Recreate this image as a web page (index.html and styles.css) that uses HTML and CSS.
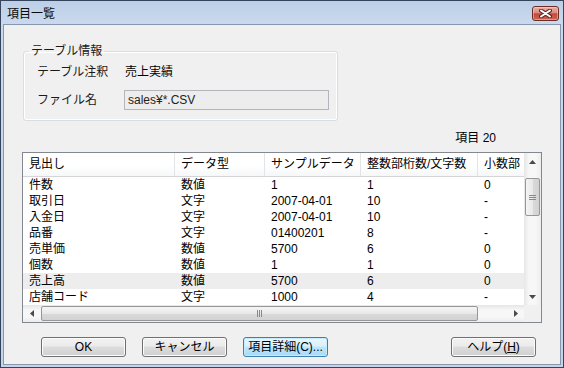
FILE: index.html
```html
<!DOCTYPE html>
<html lang="ja">
<head>
    <meta charset="UTF-8">
    <title>項目一覧</title>
    <link rel="stylesheet" href="styles.css">
</head>
<body>
<div class="window">
    <div class="titlebar">
        <span class="title">項目一覧</span>
        <span class="close">
            <svg width="13" height="9" viewBox="0 0 13 9">
                <path d="M2 1.5 L11 7.5 M11 1.5 L2 7.5" stroke="#6a2219" stroke-width="4" stroke-linecap="round"/>
                <path d="M2 1.5 L11 7.5 M11 1.5 L2 7.5" stroke="#fff" stroke-width="2" stroke-linecap="round"/>
            </svg>
        </span>
    </div>

    <div class="client">
        <fieldset class="group">
            <legend>テーブル情報</legend>
            <div class="field">
                <span class="label">テーブル注釈</span>
                <span class="value">売上実績</span>
            </div>
            <div class="field field-gap">
                <span class="label">ファイル名</span>
                <div class="input">sales¥*.CSV</div>
            </div>
        </fieldset>

        <div class="count">項目 20</div>

        <div class="listview">
            <div class="lv-view">
                <div class="lv-head">
                    <div class="lv-th">見出し</div>
                    <div class="lv-th">データ型</div>
                    <div class="lv-th">サンプルデータ</div>
                    <div class="lv-th">整数部桁数/文字数</div>
                    <div class="lv-th">小数部</div>
                </div>
                <div class="lv-row"><span>件数</span><span>数値</span><span>1</span><span>1</span><span>0</span></div>
                <div class="lv-row"><span>取引日</span><span>文字</span><span>2007-04-01</span><span>10</span><span>-</span></div>
                <div class="lv-row"><span>入金日</span><span>文字</span><span>2007-04-01</span><span>10</span><span>-</span></div>
                <div class="lv-row"><span>品番</span><span>文字</span><span>01400201</span><span>8</span><span>-</span></div>
                <div class="lv-row"><span>売単価</span><span>数値</span><span>5700</span><span>6</span><span>0</span></div>
                <div class="lv-row"><span>個数</span><span>数値</span><span>1</span><span>1</span><span>0</span></div>
                <div class="lv-row hot"><span>売上高</span><span>数値</span><span>5700</span><span>6</span><span>0</span></div>
                <div class="lv-row"><span>店舗コード</span><span>文字</span><span>1000</span><span>4</span><span>-</span></div>
            </div>

            <div class="vscroll">
                <div class="sb-btn">
                    <svg width="7" height="4" viewBox="0 0 7 4"><polygon points="0,4 3.5,0 7,4" fill="#4a4a4a"/></svg>
                </div>
                <div class="sb-track-v">
                    <div class="thumb-v">
                        <svg width="7" height="7" viewBox="0 0 7 7"><path d="M0 1.5 H7 M0 3.5 H7 M0 5.5 H7" stroke="#8a8a8a" stroke-width="1"/></svg>
                    </div>
                </div>
                <div class="sb-btn">
                    <svg width="7" height="4" viewBox="0 0 7 4"><polygon points="0,0 7,0 3.5,4" fill="#4a4a4a"/></svg>
                </div>
            </div>

            <div class="hscroll">
                <div class="sb-btn">
                    <svg width="4" height="7" viewBox="0 0 4 7"><polygon points="4,0 4,7 0,3.5" fill="#4a4a4a"/></svg>
                </div>
                <div class="sb-track-h">
                    <div class="thumb-h">
                        <svg width="7" height="7" viewBox="0 0 7 7"><path d="M1.5 0 V7 M3.5 0 V7 M5.5 0 V7" stroke="#8a8a8a" stroke-width="1"/></svg>
                    </div>
                </div>
                <div class="sb-btn">
                    <svg width="4" height="7" viewBox="0 0 4 7"><polygon points="0,0 4,3.5 0,7" fill="#4a4a4a"/></svg>
                </div>
            </div>

            <div class="corner"></div>
        </div>

        <div class="buttons">
            <button class="btn">OK</button>
            <button class="btn">キャンセル</button>
            <button class="btn default">項目詳細(C)...</button>
            <button class="btn help">ヘルプ(<u>H</u>)</button>
        </div>
    </div>
</div>
</body>
</html>
```

FILE: styles.css
```css
* {
    box-sizing: border-box;
}

html, body {
    margin: 0;
    padding: 0;
}

body {
    width: 564px;
    height: 368px;
    overflow: hidden;
    font-family: "Liberation Sans", "Noto Sans CJK JP", sans-serif;
    font-size: 12px;
    line-height: 16px;
    color: #000;
    background: #fff;
}

/* window frame */
.window {
    width: 564px;
    height: 368px;
    border: 1px solid #34455b;
    padding: 0 2px 2px;
    background: linear-gradient(#bccfe8, #cbd9ed 24px, #c4d4ea);
    display: flex;
    flex-direction: column;
}

.titlebar {
    height: 23px;
    display: flex;
    align-items: center;
    justify-content: space-between;
    padding: 0 2px 0 4px;
}

.title {
    font-family: "Noto Sans CJK JP", sans-serif;
    color: #0a0a0a;
}

.close {
    width: 27px;
    height: 15px;
    margin-top: 1px;
    border: 1px solid #6e2d24;
    border-radius: 3px;
    background: linear-gradient(#e8b0a6, #d98a7e 45%, #c24b3c 52%, #cb6456);
    box-shadow: inset 0 0 0 1px rgba(255, 220, 210, .45);
    display: flex;
    align-items: center;
    justify-content: center;
}

.client {
    flex: 1;
    border: 1px solid #8596ae;
    background: #f0f0f0;
    padding: 19px 18px 0 18px;
    display: flex;
    flex-direction: column;
}

/* group box */
.group {
    margin: 0 0 0 1px;
    width: 315px;
    padding: 4px 0 10px 0;
    border: 1px solid #d5dfe5;
    border-radius: 3px;
    box-shadow: inset 0 0 0 1px #fff;
}

.group legend {
    margin-left: 5px;
    padding: 0 2px;
    line-height: 14px;
    color: #1a1a1a;
}

.field {
    display: flex;
    align-items: center;
    height: 20px;
    padding-left: 13px;
}

.field-gap {
    margin-top: 8px;
}

.label {
    width: 87px;
    color: #1a1a1a;
}

.value {
    padding-left: 1px;
}

.input {
    width: 205px;
    height: 20px;
    border: 1px solid #b2b6ba;
    background: #ededed;
    padding: 1px 3px;
    color: #222;
}

.count {
    margin-top: 9px;
    text-align: right;
    padding-right: 46px;
}

/* list view */
.listview {
    margin-top: 6px;
    height: 171px;
    border: 1px solid #828790;
    background: #fff;
    display: grid;
    grid-template-columns: 1fr 17px;
    grid-template-rows: 1fr 17px;
}

.lv-view {
    overflow: hidden;
}

.lv-head,
.lv-row {
    display: grid;
    grid-template-columns: 152px 90px 96px 117px 60px;
    width: 515px;
}

.lv-head {
    height: 24px;
    border-bottom: 1px solid #d5d5d5;
    background: linear-gradient(#fff, #fff 55%, #f6f7f8);
}

.lv-th {
    padding-left: 6px;
    line-height: 23px;
    border-right: 1px solid #e2e4e7;
    white-space: nowrap;
    overflow: hidden;
}

.lv-row {
    height: 16px;
}

.lv-row span {
    padding-left: 6px;
    white-space: nowrap;
    overflow: hidden;
}

.lv-row.hot {
    background: #ededed;
}

/* scroll bars */
.vscroll {
    display: flex;
    flex-direction: column;
    background: linear-gradient(90deg, #e6e6e6, #f7f7f7 30%, #f7f7f7 70%, #ececec);
}

.hscroll {
    display: flex;
    background: linear-gradient(#e6e6e6, #f7f7f7 30%, #f7f7f7 70%, #ececec);
}

.sb-btn {
    flex: 0 0 17px;
    display: flex;
    align-items: center;
    justify-content: center;
}

.sb-track-v {
    flex: 1;
    padding: 8px 1px 0;
}

.thumb-v {
    height: 38px;
    border: 1px solid #979797;
    border-radius: 2px;
    background: linear-gradient(90deg, #f4f4f4, #e9e9e9 50%, #d9d9d9 51%, #d2d2d2);
    display: flex;
    align-items: center;
    justify-content: center;
}

.sb-track-h {
    flex: 1;
    padding: 1px 29px 1px 1px;
}

.thumb-h {
    height: 15px;
    border: 1px solid #979797;
    border-radius: 2px;
    background: linear-gradient(#f4f4f4, #e9e9e9 50%, #d9d9d9 51%, #d2d2d2);
    display: flex;
    align-items: center;
    justify-content: center;
}

.corner {
    background: #f0f0f0;
}

/* buttons */
.buttons {
    display: flex;
    gap: 16px;
    margin-top: 14px;
    padding: 0 6px 0 19px;
}

.btn {
    width: 85px;
    height: 20px;
    padding: 0;
    border: 1px solid #707070;
    border-radius: 3px;
    background: linear-gradient(#f2f2f2, #ebebeb 45%, #dddddd 50%, #cfcfcf);
    box-shadow: inset 0 0 0 1px #fbfbfb;
    font: inherit;
    line-height: 16px;
    color: #000;
}

.btn.default {
    border-color: #3c7fb1;
    background: linear-gradient(#eaf6fd, #d9f0fc 45%, #bee6fd 50%, #a7d9f5);
    box-shadow: inset 0 0 0 1px #c6ecfc;
}

.btn.help {
    margin-left: auto;
}

.btn u {
    text-underline-offset: 1px;
}
```
